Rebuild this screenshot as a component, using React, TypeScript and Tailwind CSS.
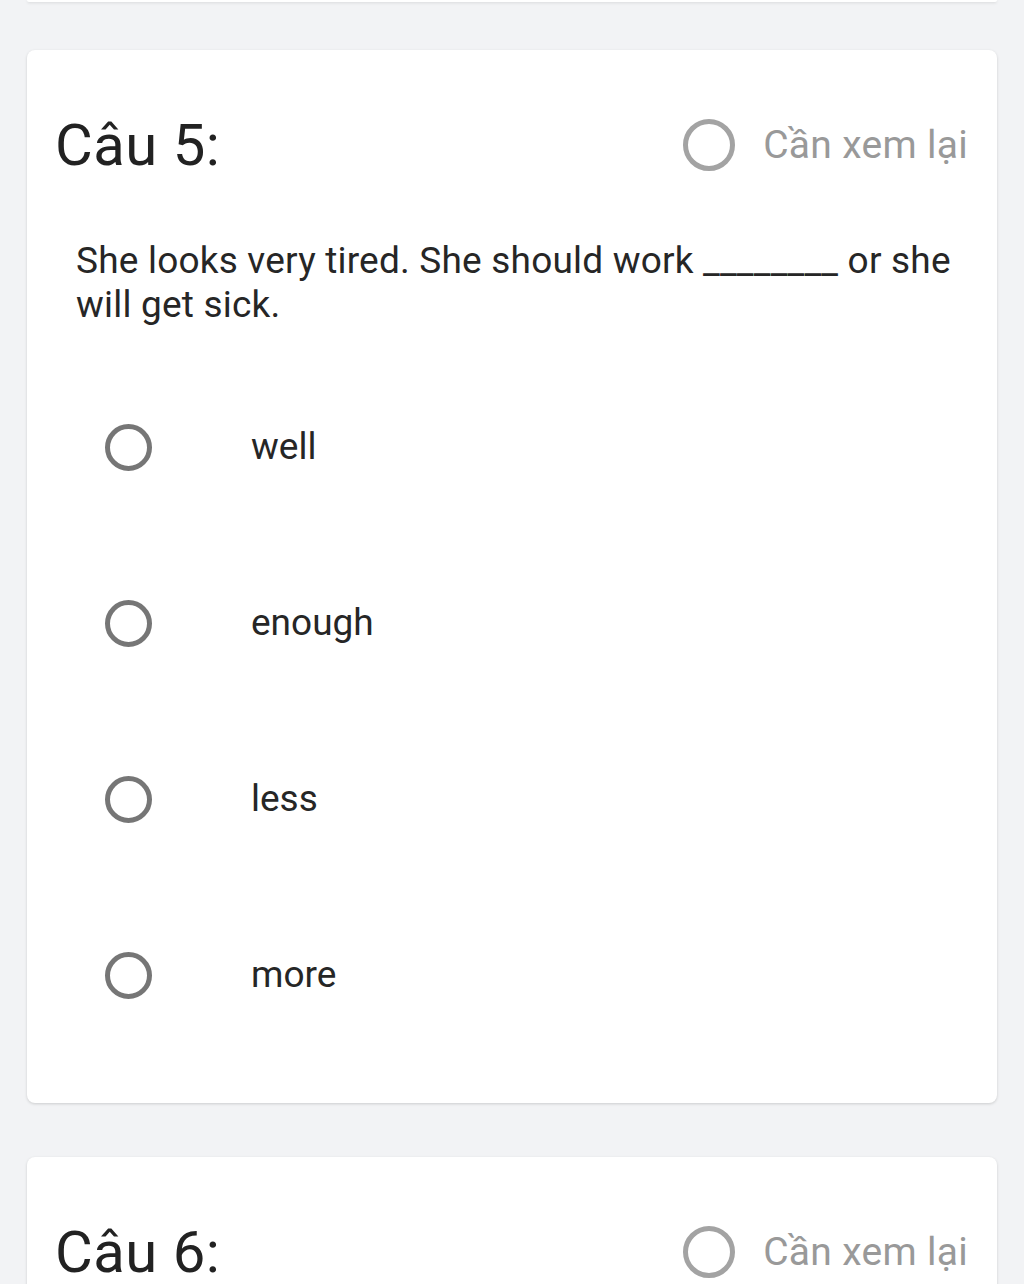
const options = ["well", "enough", "less", "more"];

function Circle({ className }: { className: string }) {
  return <span className={"block shrink-0 rounded-full " + className} />;
}

function Header({ n }: { n: number }) {
  return (
    <div className="flex h-[66px] items-center justify-between">
      <h2 className="text-[58px] leading-[66px] tracking-[0.5px] text-[#222]">Câu {n}:</h2>
      <div className="flex items-center gap-[28px] pr-[1px]">
        <Circle className="h-[52px] w-[52px] border-[5px] border-[#a3a3a3]" />
        <span className="text-[39px] leading-[46px] tracking-[0.3px] text-[#999]">Cần xem lại</span>
      </div>
    </div>
  );
}

export default function App() {
  return (
    <div className="h-[1284px] overflow-hidden bg-[#f2f3f5] px-[27px] font-['Roboto',sans-serif]">
      <div className="h-[2px] rounded-b-lg bg-white shadow-[0_1px_3px_rgba(0,0,0,0.12)]" />

      <section className="mt-[48px] rounded-lg bg-white pl-[28px] pr-[28px] pt-[62px] pb-[40px] shadow-[0_1px_3px_rgba(0,0,0,0.16)]">
        <Header n={5} />
        <p className="mt-[61px] pl-[21px] text-[37px] leading-[44px] tracking-[0.2px] text-[#262626]">
          She looks very tired. She should work ________ or she will get sick.
        </p>
        <ul className="mt-[32px]">
          {options.map((o) => (
            <li key={o} className="flex h-[176px] items-center">
              <Circle className="ml-[50px] h-[47px] w-[47px] border-[5px] border-[#767676]" />
              <span className="ml-[99px] text-[37px] leading-[44px] text-[#262626]">{o}</span>
            </li>
          ))}
        </ul>
      </section>

      <section className="mt-[54px] h-[200px] rounded-lg bg-white px-[28px] pt-[62px] shadow-[0_1px_3px_rgba(0,0,0,0.16)]">
        <Header n={6} />
      </section>
    </div>
  );
}
